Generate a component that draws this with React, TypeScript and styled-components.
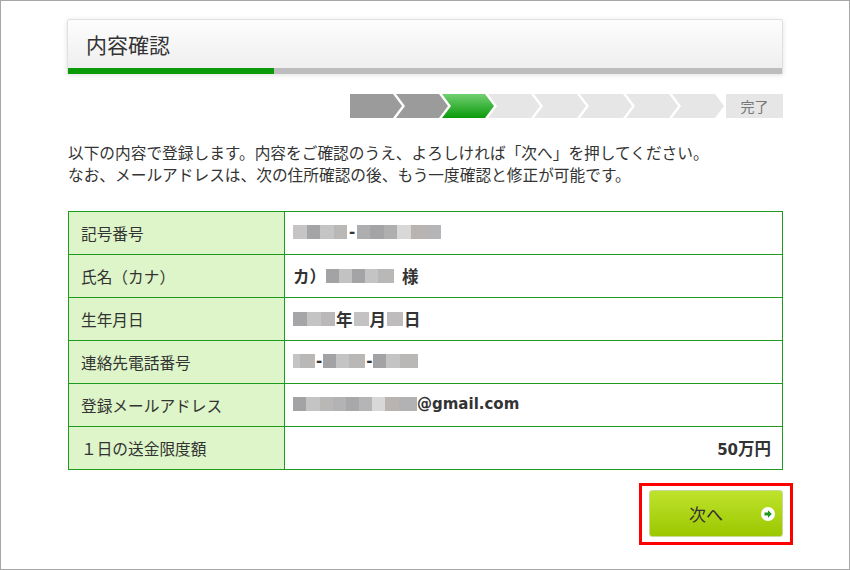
import React from "react";
import styled, { createGlobalStyle } from "styled-components";

const GlobalStyle = createGlobalStyle`
    html, body {
        margin: 0;
        padding: 0;
        background: #fff;
    }
    body {
        font-family: "DejaVu Sans", "Noto Sans CJK JP", sans-serif;
        color: #333;
    }
`;

const Frame = styled.div`
    width: 850px;
    height: 570px;
    box-sizing: border-box;
    border: 1px solid #a6a6a6;
    padding: 18px 0 0 66px;
    overflow: hidden;
`;

const Content = styled.div`
    width: 716px;
`;

const Card = styled.div`
    border: 1px solid #e0e0e0;
    border-bottom: none;
    border-radius: 3px 3px 0 0;
    background: linear-gradient(#fdfdfd, #ededed);
    box-shadow: 0 1px 5px rgba(0, 0, 0, 0.12);
`;

const Title = styled.h1`
    margin: 0;
    height: 48px;
    padding-left: 18px;
    display: flex;
    align-items: center;
    font-family: "Noto Sans CJK JP", sans-serif;
    font-size: 21px;
    font-weight: normal;
    color: #333;
`;

const Progress = styled.div`
    height: 6px;
    background: #bdbdbd;
`;

const ProgressFill = styled.div`
    height: 100%;
    background: #0a9a0a;
`;

const Steps = styled.div`
    margin-top: 20px;
    height: 24px;
    display: flex;
    justify-content: flex-end;
    align-items: stretch;
`;

const Step = styled.div<{ $state: "done" | "current" | "todo"; $first?: boolean }>`
    width: 52px;
    margin-right: -6px;
    background: ${(p) =>
        p.$state === "done"
            ? "#9b9b9b"
            : p.$state === "current"
            ? "linear-gradient(#72d072, #0a9a0a)"
            : "#e6e6e6"};
    clip-path: ${(p) =>
        p.$first
            ? "polygon(0 0, calc(100% - 9px) 0, 100% 50%, calc(100% - 9px) 100%, 0 100%)"
            : "polygon(0 0, calc(100% - 9px) 0, 100% 50%, calc(100% - 9px) 100%, 0 100%, 9px 50%)"};
`;

const Done = styled.div`
    width: 57px;
    margin-left: 8px;
    background: #e6e6e6;
    color: #777;
    font-family: "Noto Sans CJK JP", sans-serif;
    font-size: 14px;
    display: flex;
    align-items: center;
    justify-content: center;
`;

const Lead = styled.p`
    margin: 24px 0 0 1px;
    font-family: "Noto Sans CJK JP", sans-serif;
    font-size: 15.7px;
    line-height: 22px;
    color: #333;
`;

const Table = styled.table`
    margin: 25px 0 0 1px;
    width: 715px;
    border-collapse: collapse;
`;

const Label = styled.th`
    width: 203px;
    height: 42px;
    padding: 0 0 0 12px;
    border: 1px solid #1e9a1e;
    background: #ddf5c8;
    text-align: left;
    font-family: "Noto Sans CJK JP", sans-serif;
    font-size: 15.7px;
    font-weight: normal;
    color: #333;
`;

const Value = styled.td<{ $right?: boolean }>`
    height: 42px;
    padding: 0 ${(p) => (p.$right ? "11px" : "0")} 0 8px;
    border: 1px solid #1e9a1e;
    text-align: ${(p) => (p.$right ? "right" : "left")};
    font-size: 15px;
    font-weight: bold;
    color: #333;
    white-space: nowrap;
`;

const Inline = styled.span`
    display: inline-flex;
    align-items: center;
`;

const Mosaic = styled.span`
    display: inline-flex;
    height: 14px;
`;

const Cell = styled.span<{ $w: number; $c: string }>`
    width: ${(p) => p.$w}px;
    height: 100%;
    background: ${(p) => p.$c};
`;

const Jp = styled.span<{ $pad?: number }>`
    font-family: "Noto Sans CJK JP", sans-serif;
    font-size: 16.5px;
    padding: 0 ${(p) => p.$pad ?? 1}px;
`;

const ButtonRow = styled.div`
    display: flex;
    justify-content: flex-end;
    margin: 13px -10px 0 0;
`;

const Highlight = styled.div`
    border: 3px solid #ff0000;
    padding: 4px 7px 5px 7px;
`;

const NextButton = styled.button`
    position: relative;
    width: 134px;
    height: 47px;
    border: 1px solid #c9d99a;
    border-radius: 3px;
    background: linear-gradient(#bfe32c, #9bc700);
    font-family: "Noto Sans CJK JP", sans-serif;
    font-size: 17px;
    color: #333;
    padding: 0 20px 0 0;
    cursor: pointer;
`;

const ArrowIcon = styled.svg`
    position: absolute;
    right: 7px;
    top: 50%;
    margin-top: -7px;
`;

const M = ({ cells }: { cells: [number, string][] }) => (
    <Mosaic>
        {cells.map(([w, c], i) => (
            <Cell key={i} $w={w} $c={c} />
        ))}
    </Mosaic>
);

const steps: ("done" | "current" | "todo")[] = ["done", "done", "current", "todo", "todo", "todo", "todo", "todo"];

const App = () => {
    return (
        <>
            <GlobalStyle />
            <Frame>
                <Content>
                    <Card>
                        <Title>内容確認</Title>
                        <Progress>
                            <ProgressFill style={{ width: "206px" }} />
                        </Progress>
                    </Card>

                    <Steps>
                        {steps.map((s, i) => (
                            <Step key={i} $state={s} $first={i === 0} />
                        ))}
                        <Done>完了</Done>
                    </Steps>

                    <Lead>
                        以下の内容で登録します。内容をご確認のうえ、よろしければ「次へ」を押してください。
                        <br />
                        なお、メールアドレスは、次の住所確認の後、もう一度確認と修正が可能です。
                    </Lead>

                    <Table>
                        <tbody>
                            <tr>
                                <Label>記号番号</Label>
                                <Value>
                                    <Inline>
                                        <M cells={[[14, "#c6c4c4"], [13, "#a4a3a6"], [14, "#c4c4c4"], [13, "#bab8b7"]]} />
                                        <span style={{ padding: "0 2px" }}>-</span>
                                        <M cells={[[13, "#aeaeb1"], [14, "#a4a3a6"], [13, "#b0afaf"], [14, "#d8d8d8"], [13, "#b9b4b2"], [17, "#b5b5b8"]]} />
                                    </Inline>
                                </Value>
                            </tr>
                            <tr>
                                <Label>氏名（カナ）</Label>
                                <Value>
                                    <Inline>
                                        <Jp $pad={0}>カ）</Jp>
                                        <M cells={[[13, "#a3a2a5"], [13, "#c2c2c2"], [13, "#a4a3a6"], [13, "#c4c4c4"], [16, "#bab8b7"]]} />
                                        <Jp $pad={8}>様</Jp>
                                    </Inline>
                                </Value>
                            </tr>
                            <tr>
                                <Label>生年月日</Label>
                                <Value>
                                    <Inline>
                                        <M cells={[[14, "#a6a5a8"], [14, "#c4c4c4"], [14, "#bab8b8"]]} />
                                        <Jp>年</Jp>
                                        <M cells={[[15, "#c4c2c2"]]} />
                                        <Jp>月</Jp>
                                        <M cells={[[16, "#bebcbc"]]} />
                                        <Jp>日</Jp>
                                    </Inline>
                                </Value>
                            </tr>
                            <tr>
                                <Label>連絡先電話番号</Label>
                                <Value>
                                    <Inline>
                                        <M cells={[[7, "#c4c4c4"], [15, "#bab8b7"]]} />
                                        <span style={{ padding: "0 1px" }}>-</span>
                                        <M cells={[[13, "#a3a2a5"], [13, "#c4c4c4"], [16, "#bab8b7"]]} />
                                        <span style={{ padding: "0 1px" }}>-</span>
                                        <M cells={[[13, "#a3a2a5"], [14, "#c4c4c4"], [18, "#bab8b7"]]} />
                                    </Inline>
                                </Value>
                            </tr>
                            <tr>
                                <Label>登録メールアドレス</Label>
                                <Value>
                                    <Inline>
                                        <M
                                            cells={[
                                                [13, "#a3a2a5"],
                                                [14, "#c4c4c4"],
                                                [13, "#bab8b7"],
                                                [13, "#b3b3b5"],
                                                [13, "#a8a7aa"],
                                                [13, "#b5b5b7"],
                                                [13, "#d8d8d8"],
                                                [14, "#b9b4b2"],
                                                [18, "#b2b2b5"],
                                            ]}
                                        />
                                        <span>@gmail.com</span>
                                    </Inline>
                                </Value>
                            </tr>
                            <tr>
                                <Label>１日の送金限度額</Label>
                                <Value $right>
                                    50<Jp $pad={0}>万円</Jp>
                                </Value>
                            </tr>
                        </tbody>
                    </Table>

                    <ButtonRow>
                        <Highlight>
                            <NextButton>
                                次へ
                                <ArrowIcon width="14" height="14" viewBox="0 0 14 14">
                                    <circle cx="7" cy="7" r="7" fill="#fff" />
                                    <path d="M3.5 5.6 H7 V3.3 L10.8 7 L7 10.7 V8.4 H3.5 Z" fill="#1a9a1a" />
                                </ArrowIcon>
                            </NextButton>
                        </Highlight>
                    </ButtonRow>
                </Content>
            </Frame>
        </>
    );
};

export default App;
